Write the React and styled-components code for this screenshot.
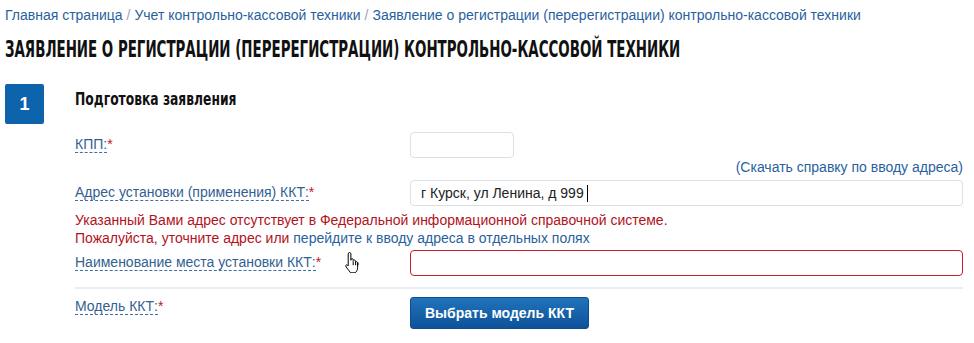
import React from 'react'
import styled, { createGlobalStyle } from 'styled-components'

const GlobalStyle = createGlobalStyle`
  html, body {
    margin: 0;
    padding: 0;
    background: #fff;
  }
  body {
    font-family: "Liberation Sans", Arial, sans-serif;
    font-size: 14px;
    color: #222;
  }
`

const Page = styled.div`
  width: 974px;
  height: 343px;
  box-sizing: border-box;
  padding: 6px 11px 0 5px;
  overflow: hidden;
`

const Crumbs = styled.nav`
  font-size: 14px;
  line-height: 18px;
  color: #2a5f9e;
`

const Sep = styled.span`
  color: #9aa5b1;
  margin: 0 4px;
`

const Title = styled.h1`
  margin: 12px 0 0;
  font-family: "DejaVu Sans Condensed", "Liberation Sans", sans-serif;
  font-weight: bold;
  font-size: 23px;
  line-height: 27px;
  color: #111;
  white-space: nowrap;
  transform-origin: left center;
  transform: scaleX(${p => p.$squeeze});
`

const Step = styled.section`
  display: grid;
  grid-template-columns: 39px 1fr;
  column-gap: 31px;
  margin-top: 21px;
`

const Badge = styled.div`
  width: 39px;
  height: 40px;
  border-radius: 2px;
  background: #0e63ad;
  color: #fff;
  font-weight: bold;
  font-size: 18px;
  display: flex;
  align-items: center;
  justify-content: center;
`

const StepTitle = styled.h2`
  margin: 3px 0 0;
  font-family: "DejaVu Sans Condensed", "Liberation Sans", sans-serif;
  font-weight: bold;
  font-size: 18px;
  line-height: 23px;
  color: #111;
  white-space: nowrap;
  transform-origin: left center;
  transform: scaleX(${p => p.$squeeze});
`

const Form = styled.div`
  display: flex;
  flex-direction: column;
  margin-top: 22px;
`

const Row = styled.div`
  position: relative;
  display: grid;
  grid-template-columns: 335px 1fr;
  align-items: start;
  margin-top: ${p => p.$gap || 0}px;
`

const Label = styled.div`
  padding-top: ${p => p.$top || 4}px;
  color: #335f93;
  line-height: 17px;
`

const Dashed = styled.span`
  border-bottom: 1px dashed #3d6ea8;
`

const Star = styled.span`
  color: #c0171f;
`

const Field = styled.div`
  box-sizing: border-box;
  width: ${p => p.$width || '100%'};
  height: 26px;
  border: 1px solid ${p => (p.$invalid ? '#c8202a' : '#dcdfe3')};
  border-radius: 4px;
  background: #fff;
  padding: 0 10px;
  display: flex;
  align-items: center;
  font-size: 14px;
  color: #222;
`

const Caret = styled.span`
  display: inline-block;
  width: 1px;
  height: 17px;
  background: #000;
  margin-left: 3px;
`

const Help = styled.a`
  align-self: flex-end;
  margin-top: 1px;
  line-height: 17px;
  color: #2a5f9e;
  text-decoration: none;
`

const Error = styled.div`
  margin-top: 5px;
  line-height: 18px;
  color: #b3121c;
`

const ErrorLink = styled.a`
  color: #2a5f9e;
  text-decoration: none;
`

const Divider = styled.hr`
  margin: 11px 0 8px;
  border: 0;
  height: 2px;
  background: #e8edf2;
`

const Button = styled.button`
  width: 179px;
  height: 32px;
  border: 1px solid #0b4d92;
  border-radius: 3px;
  background: linear-gradient(#2173ba, #0d5299);
  color: #fff;
  font-family: "Liberation Sans", Arial, sans-serif;
  font-weight: bold;
  font-size: 14px;
  cursor: pointer;
`

const Pointer = styled.svg`
  position: absolute;
  left: 269px;
  top: 1px;
`

function HandCursor() {
  return (
    <Pointer width="18" height="22" viewBox="0 0 18 22">
      <path
        d="M5.5 1.5c.8 0 1.4.6 1.4 1.4v6.3l.1-1c.3-.6 1.4-.7 1.9-.1.2.2.3.5.3.8v.6c.3-.7 1.5-.8 2-.1.2.3.3.5.3.8v.8c.4-.6 1.5-.6 1.9.1.2.3.2.6.2 1v4.6c0 2.3-1.2 4-2.3 5.1H6.6c-1-1.2-2.3-3-3.6-4.7-.6-.8-1.3-1.6-1.3-2.3 0-.8.9-1.2 1.7-.7l.8.8V2.9c0-.8.6-1.4 1.3-1.4z"
        fill="#fff"
        stroke="#000"
        strokeWidth="1"
        strokeLinejoin="round"
      />
      <path d="M9.2 10.2v4M11.6 11v3.2M14 11.6v2.6" stroke="#000" strokeWidth="1" />
    </Pointer>
  )
}

export default function App() {
  return (
    <>
      <GlobalStyle />
      <Page>
        <Crumbs>
          Главная страница<Sep>/</Sep>Учет контрольно-кассовой техники<Sep>/</Sep>
          Заявление о регистрации (перерегистрации) контрольно-кассовой техники
        </Crumbs>
        <Title $squeeze={0.647}>ЗАЯВЛЕНИЕ О РЕГИСТРАЦИИ (ПЕРЕРЕГИСТРАЦИИ) КОНТРОЛЬНО-КАССОВОЙ ТЕХНИКИ</Title>
        <Step>
          <Badge>1</Badge>
          <div>
            <StepTitle $squeeze={0.76}>Подготовка заявления</StepTitle>
            <Form>
              <Row>
                <Label><Dashed>КПП:</Dashed><Star>*</Star></Label>
                <Field $width="104px" />
              </Row>
              <Help href="#">(Скачать справку по вводу адреса)</Help>
              <Row $gap={4}>
                <Label><Dashed>Адрес установки (применения) ККТ:</Dashed><Star>*</Star></Label>
                <Field>г Курск, ул Ленина, д 999<Caret /></Field>
              </Row>
              <Error>
                Указанный Вами адрес отсутствует в Федеральной информационной справочной системе.
                <br />
                Пожалуйста, уточните адрес или <ErrorLink href="#">перейдите к вводу адреса в отдельных полях</ErrorLink>
              </Error>
              <Row $gap={3}>
                <Label><Dashed>Наименование места установки ККТ:</Dashed><Star>*</Star></Label>
                <Field $invalid />
                <HandCursor />
              </Row>
              <Divider />
              <Row>
                <Label $top={1}><Dashed>Модель ККТ:</Dashed><Star>*</Star></Label>
                <Button>Выбрать модель ККТ</Button>
              </Row>
            </Form>
          </div>
        </Step>
      </Page>
    </>
  )
}
